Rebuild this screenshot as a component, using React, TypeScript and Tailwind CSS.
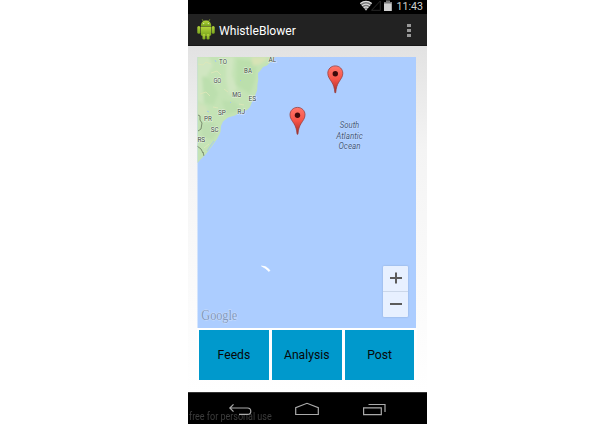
import React from "react";

const regions: [string, number, number][] = [
  ["TO", 223, 63.7],
  ["AL", 272.5, 62.4],
  ["BA", 248, 72.9],
  ["GO", 217.3, 82.9],
  ["MG", 236.7, 96.9],
  ["ES", 252.3, 101.1],
  ["RJ", 241.2, 114],
  ["SP", 222, 114.8],
  ["PR", 208, 121.4],
  ["SC", 214.7, 132],
  ["RS", 201.3, 141.6],
];

function Pin({ x, y }: { x: number; y: number }) {
  return (
    <g transform={`translate(${x} ${y})`}>
      <path
        d="M0 .4C-4.3.4-7.5 3.6-7.5 7.8c0 3.5 2 5.7 3.9 8.7C-1.700 19.600-.9 22.200-.4 27.200h.8C.9 22.200 1.700 19.600 3.600 16.500c1.900-3 3.900-5.200 3.900-8.700C7.500 3.600 4.300.4 0 .4Z"
        fill="url(#pin)"
        stroke="#983f3d"
        strokeWidth=".8"
      />
      <circle cx="0" cy="8.200" r="2.700" fill="#3d0a0a" />
    </g>
  );
}

function MapView() {
  return (
    <svg className="block h-[270.500px] w-[219px]" viewBox="197 57 219 270.500">
      <defs>
        <linearGradient id="pin" x1="0" y1="0" x2="0" y2="1">
          <stop offset="0" stopColor="#ff776b" />
          <stop offset=".5" stopColor="#f65347" />
          <stop offset="1" stopColor="#a52b26" />
        </linearGradient>
        <filter id="soft" x="-50%" y="-50%" width="200%" height="200%">
          <feGaussianBlur stdDeviation="1.8" />
        </filter>
        <clipPath id="land">
          <path d="M197.500 57H275L272.500 61 270 62.500 267 65.500 263 67 260 71 258 73 258.200 80 257.500 84 257.200 90 254.500 97 252 102 250 107 247 110 240 112.500 235 115.500 228 117.500 223 121.500 221 126 220.500 132 217 139 212 146 206 154 201 159 197.500 163Z" />
        </clipPath>
      </defs>
      <rect x="197.500" y="57" width="219" height="271" fill="#accdff" />
      <g clipPath="url(#land)">
        <rect x="197" y="57" width="80" height="107" fill="#c4e3b5" />
        <g filter="url(#soft)">
          <path d="M197 57h12l4 9-8 12 5 12-6 14-7-3ZM226 57h8l-2 18 5 14-8 7-3-17Z" fill="#d0e6c1" />
          <path d="M237 59l20 3-2 18-5 14-14-9Z" fill="#bbdfac" />
          <path d="M202 76l8 3 8 14-4 12-10-2ZM222 100l13 2 8 8-17 5Z" fill="#bcdfae" />
          <path d="M201 124l11-2 7 7-6 11-11-3Z" fill="#bddeb0" />
          <path d="M251 57l18 0-8 7-8 2Z" fill="#d8e3b6" />
          <path d="M197 103l9 3 3 8-12 3Z" fill="#cfe3bb" />
        </g>
        <path d="M198 64l5 1 3-3 5 2M200 94l6-2 4 4M211 73l6-2 4 4M224 89l4 3M213 107l5 1M239 104l5 1M204 148l5-4" fill="none" stroke="#dce6b9" strokeWidth=".9" />
        <path d="M230 102l1 1M207 111l2 1M215 60l1 2M207 151l4-6 3-4M241 80l-1 1" fill="none" stroke="#a4c8ed" strokeWidth="1" />
        <path d="M198 115l2 1v4l2 3-1 6-3 2M197 146l4 3 2 4M203 152l1 4" fill="none" stroke="#68795f" strokeWidth=".8" />
      </g>
      <g fontFamily="Roboto, sans-serif" fontSize="7" textAnchor="middle" fill="#414b45" stroke="#fff" strokeWidth="1.200" strokeOpacity=".6" paintOrder="stroke">
        {regions.map(([name, x, y]) => (
          <text key={name} x={x} y={y} textLength={name === "MG" ? 9 : 7.8} lengthAdjust="spacingAndGlyphs">{name}</text>
        ))}
      </g>
      <g fontFamily="Roboto, sans-serif" fontSize="8.400" fontStyle="italic" textAnchor="middle" fill="#455b7e" stroke="#d3e4ff" strokeWidth="1" strokeOpacity=".6" paintOrder="stroke">
        <text x="349.500" y="128.300" textLength="19.500" lengthAdjust="spacingAndGlyphs">South</text>
        <text x="349.500" y="138.800" textLength="26.500" lengthAdjust="spacingAndGlyphs">Atlantic</text>
        <text x="349.500" y="149.300" textLength="22" lengthAdjust="spacingAndGlyphs">Ocean</text>
      </g>
      <Pin x={335.3} y={65.5} />
      <Pin x={297.5} y={107} />
      <path d="M261.500 266q4.800-.5 8.500 4.500l-1 1q-3-3.300-7.500-5.500Z" fill="#fff" stroke="#fff" strokeWidth=".7" />
      <text x="201.300" y="320.200" fontFamily="'Liberation Serif', serif" fontSize="14" textLength="36" lengthAdjust="spacingAndGlyphs" fill="#8198bd" stroke="#dce8fb" strokeWidth="1" strokeOpacity=".7" paintOrder="stroke">Google</text>
    </svg>
  );
}

function Android() {
  return (
    <svg className="h-[21px] w-[18px] shrink-0" viewBox="0 0 18 21">
      <defs>
        <linearGradient id="robot" x1="0" y1="0" x2="0" y2="1">
          <stop offset="0" stopColor="#b6d63b" />
          <stop offset="1" stopColor="#79a51d" />
        </linearGradient>
      </defs>
      <g fill="url(#robot)">
        <path d="M3.800 7C3.800 3.500 6 1.500 9 1.500s5.200 2 5.200 5.500Z" />
        <path d="M3.800 7.500h10.400v8q0 1.300-1.300 1.300H5.100q-1.300 0-1.300-1.300Z" />
        <rect x=".3" y="7" width="3" height="7.800" rx="1.500" />
        <rect x="14.700" y="7" width="3" height="7.800" rx="1.500" />
        <rect x="5.500" y="15" width="2.900" height="5.500" rx="1.300" />
        <rect x="9.600" y="15" width="2.900" height="5.500" rx="1.300" />
      </g>
      <path d="M5.200 .3l1.200 2M12.800 .3l-1.200 2" stroke="#9fc431" strokeWidth=".7" />
      <circle cx="6.700" cy="4.600" r=".6" fill="#e8f0cf" />
      <circle cx="11.300" cy="4.600" r=".6" fill="#e8f0cf" />
    </svg>
  );
}

function StatusBar() {
  return (
    <div className="flex h-[14px] items-start justify-end bg-black pr-[2px]">
      <svg className="mr-[2px] h-[12px] w-[33px]" viewBox="361 0 33 12">
        <path d="M361 3.500Q367-1.300 373 3.500L367 10.700Z" fill="#777" />
        <path d="M361.300 3.600Q367-.8 372.700 3.600M363 5.700Q367 2.600 371 5.700M364.700 7.700Q367 6 369.300 7.700" fill="none" stroke="#ddd" strokeWidth="1.300" />
        <path d="M366 8.800h2l-1 1.600Z" fill="#ddd" />
        <path d="M372.500 10.300l8.800-9.300v9.300Z" fill="none" stroke="#343434" strokeWidth=".8" />
        <path d="M385 2h2V.7h3.800V2h2v9H385Z" fill="#d0d0d0" />
        <path d="M385 2h2V.7h3.800V2h2v1.500H385Z" fill="#777" />
      </svg>
      <svg className="h-[14px] w-[30px]" viewBox="0 0 30 14">
        <text x="1.500" y="10.300" fontFamily="Roboto, sans-serif" fontSize="11.500" textLength="26.500" lengthAdjust="spacingAndGlyphs" fill="#d0d0d0">11:43</text>
      </svg>
    </div>
  );
}

function NavBar() {
  return (
    <div className="relative h-8 border-t border-[#333] bg-black">
      <span className="absolute left-[0.500px] top-[17px] origin-left scale-x-[0.9] whitespace-nowrap text-[10px] leading-[13px] text-[#3c3c3c]">
        free for personal use
      </span>
      <svg className="relative block h-[31px] w-[239px]" viewBox="188 393 239 31" fill="none" stroke="#aaa" strokeWidth="1.200">
        <path d="M233.500 404.300l-3.700 3.700 3.700 3.700M230 408h17.500q3.300 0 3.300 3.200t-3.300 3.200H239" />
        <path d="M295.700 414.500v-6.800l11.300-4.400 11.300 4.400v6.800Z" />
        <path d="M363.600 407.900h17.700v6.700h-17.700ZM368.500 404.500h16.500v7.500" />
      </svg>
    </div>
  );
}

export default function App() {
  return (
    <div className="flex h-[424px] w-[615px] justify-center overflow-hidden bg-white font-[Roboto,sans-serif]">
      <main className="flex h-full w-[239px] flex-col">
        <StatusBar />
        <header className="flex h-8 items-center border-b border-[#171717] bg-[#222] pl-[9px] pr-4 text-white">
          <Android />
          <h1 className="ml-1 flex-1 whitespace-nowrap pt-[2px] text-[12.100px] leading-4">WhistleBlower</h1>
          <div className="flex flex-col gap-[2px] pt-[2px]">
            <i className="block h-[3px] w-1 bg-[#999]" />
            <i className="block h-[3px] w-1 bg-[#999]" />
            <i className="block h-[3px] w-1 bg-[#999]" />
          </div>
        </header>
        <section className="flex h-[346px] flex-col bg-linear-to-b from-[#e2e2e2] via-[#f4f4f4] via-30% to-white pl-[9px] pr-[11px] pt-[11px]">
          <div className="relative h-[270.500px]">
            <MapView />
            <div className="absolute bottom-[11px] right-[8px] flex h-[51px] w-[25px] flex-col rounded-[1px] bg-[#e7f0ff] shadow-[0_0_2px_#8da5c9]">
              <button className="flex flex-1 items-center justify-center border-b border-[#cbd7e9]" aria-label="Zoom in">
                <svg className="size-3" viewBox="0 0 12 12" stroke="#5b5b5b" strokeWidth="2"><path d="M0 6h12M6 .5v11" /></svg>
              </button>
              <button className="flex flex-1 items-center justify-center" aria-label="Zoom out">
                <svg className="size-3" viewBox="0 0 12 12" stroke="#5b5b5b" strokeWidth="2"><path d="M0 6h12" /></svg>
              </button>
            </div>
          </div>
          <div className="-mr-px flex gap-[3px] bg-white pl-[2px] pr-[2.500px] pt-[2px] text-[12.200px] text-[#080808]">
            <button className="h-[50.500px] flex-1 bg-[#0099cc] pt-px">Feeds</button>
            <button className="h-[50.500px] flex-1 bg-[#0099cc] pt-px">Analysis</button>
            <button className="h-[50.500px] flex-1 bg-[#0099cc] pt-px">Post</button>
          </div>
        </section>
        <NavBar />
      </main>
    </div>
  );
}
